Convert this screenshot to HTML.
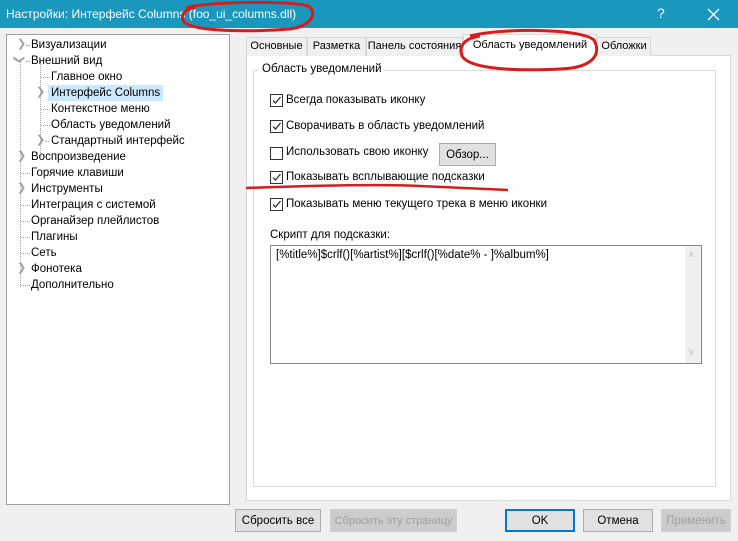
<!DOCTYPE html>
<html><head><meta charset="utf-8"><style>
*{box-sizing:border-box}
body{margin:0;width:738px;height:541px;background:#f0f0f0;font-family:"Liberation Sans",sans-serif;font-size:11.5px;color:#000;position:relative;overflow:hidden}
.a{position:absolute;white-space:nowrap}
.tb{left:0;top:0;width:738px;height:28px;background:#1a97bd;color:#fff;font-size:12px}
.tree{left:6px;top:34px;width:224px;height:471px;background:#fff;border:1px solid #a0a0a0}
.it{position:absolute;height:16px;line-height:16px}
.sel{background:#cce8ff;padding:0 3px}
.chev{position:absolute;color:#a0a0a0;font-size:11px}
.dv{position:absolute;border-left:1px dotted #a0a0a0;width:0}
.dh{position:absolute;border-top:1px dotted #a0a0a0;height:0}
.tab{position:absolute;top:37px;height:19px;line-height:17px;border:1px solid #d9d9d9;border-bottom:none;background:#f0f0f0;text-align:center;font-size:11px;overflow:hidden;white-space:nowrap}
.panel{left:246px;top:55px;width:485px;height:446px;background:#fff;border:1px solid #d9d9d9}
.grp{left:253px;top:70px;width:463px;height:417px;border:1px solid #dcdcdc}
.cb{position:absolute;width:13px;height:13px;border:1px solid #333;background:#fff}
.cb svg{position:absolute;left:0;top:0}
.btn{position:absolute;height:23px;line-height:22px;text-align:center;border:1px solid #adadad;background:#e1e1e1}
.dis{color:#a0a0a0;border-color:#cfcfcf;background:#ccc}
</style></head><body>
<div class="a tb"><span style="position:absolute;left:6px;top:7px">Настройки: Интерфейс Columns (foo_ui_columns.dll)</span>
<span style="position:absolute;left:657px;top:5px;font-size:14px">?</span>
<svg style="position:absolute;left:707px;top:8px" width="13" height="13"><path d="M1 1L12 12M12 1L1 12" stroke="#fff" stroke-width="1.3"/></svg></div>

<div class="a tree">
<div class="dv" style="left:13px;top:26px;height:96px"></div>
<div class="dv" style="left:33px;top:26px;height:96px"></div>
<div class="dv" style="left:13px;top:124px;height:128px"></div>
<span class="chev" style="left:10px;top:2px">&#x276F;</span><div class="dh" style="left:19px;top:10px;width:4px"></div><div class="it" style="left:24px;top:2px">Визуализации</div>
<span class="chev" style="left:8px;top:18px;transform:rotate(90deg)">&#x276F;</span><div class="dh" style="left:19px;top:26px;width:4px"></div><div class="it" style="left:24px;top:18px">Внешний вид</div>
<div class="dh" style="left:34px;top:42px;width:9px"></div><div class="it" style="left:44px;top:34px">Главное окно</div>
<span class="chev" style="left:29px;top:50px">&#x276F;</span><div class="it sel" style="left:41px;top:50px">Интерфейс Columns</div>
<div class="dh" style="left:34px;top:74px;width:9px"></div><div class="it" style="left:44px;top:66px">Контекстное меню</div>
<div class="dh" style="left:34px;top:90px;width:9px"></div><div class="it" style="left:44px;top:82px">Область уведомлений</div>
<span class="chev" style="left:29px;top:98px">&#x276F;</span><div class="dh" style="left:38px;top:106px;width:4px"></div><div class="it" style="left:44px;top:98px">Стандартный интерфейс</div>
<span class="chev" style="left:10px;top:114px">&#x276F;</span><div class="it" style="left:24px;top:114px">Воспроизведение</div>
<div class="dh" style="left:14px;top:138px;width:9px"></div><div class="it" style="left:24px;top:130px">Горячие клавиши</div>
<span class="chev" style="left:10px;top:146px">&#x276F;</span><div class="it" style="left:24px;top:146px">Инструменты</div>
<div class="dh" style="left:14px;top:170px;width:9px"></div><div class="it" style="left:24px;top:162px">Интеграция с системой</div>
<div class="dh" style="left:14px;top:186px;width:9px"></div><div class="it" style="left:24px;top:178px">Органайзер плейлистов</div>
<div class="dh" style="left:14px;top:202px;width:9px"></div><div class="it" style="left:24px;top:194px">Плагины</div>
<div class="dh" style="left:14px;top:218px;width:9px"></div><div class="it" style="left:24px;top:210px">Сеть</div>
<span class="chev" style="left:10px;top:226px">&#x276F;</span><div class="it" style="left:24px;top:226px">Фонотека</div>
<div class="dh" style="left:14px;top:250px;width:9px"></div><div class="it" style="left:24px;top:242px">Дополнительно</div>
</div>

<div class="a panel"></div>
<div class="tab" style="left:246px;width:61px">Основные</div>
<div class="tab" style="left:307px;width:59px">Разметка</div>
<div class="tab" style="left:366px;width:97px">Панель состояния</div>
<div class="tab" style="left:463px;width:134px;top:34px;height:22px;background:#fff;line-height:20px">Область уведомлений</div>
<div class="tab" style="left:597px;width:54px">Обложки</div>
<div class="a grp"></div>
<div class="a" style="left:259px;top:63px;background:#fff;padding:0 3px">Область уведомлений</div>

<div class="cb" style="left:270px;top:94px"><svg width="11" height="11"><path d="M2 5.5L4.5 8L9.5 2" stroke="#222" fill="none" stroke-width="1.2"/></svg></div>
<div class="a" style="left:286px;top:94px">Всегда показывать иконку</div>
<div class="cb" style="left:270px;top:120px"><svg width="11" height="11"><path d="M2 5.5L4.5 8L9.5 2" stroke="#222" fill="none" stroke-width="1.2"/></svg></div>
<div class="a" style="left:286px;top:120px">Сворачивать в область уведомлений</div>
<div class="cb" style="left:270px;top:147px"></div>
<div class="a" style="left:286px;top:146px">Использовать свою иконку</div>
<div class="btn" style="left:439px;top:143px;width:57px">Обзор...</div>
<div class="cb" style="left:270px;top:171px"><svg width="11" height="11"><path d="M2 5.5L4.5 8L9.5 2" stroke="#222" fill="none" stroke-width="1.2"/></svg></div>
<div class="a" style="left:286px;top:171px">Показывать всплывающие подсказки</div>
<div class="cb" style="left:270px;top:198px"><svg width="11" height="11"><path d="M2 5.5L4.5 8L9.5 2" stroke="#222" fill="none" stroke-width="1.2"/></svg></div>
<div class="a" style="left:286px;top:198px">Показывать меню текущего трека в меню иконки</div>
<div class="a" style="left:270px;top:229px">Скрипт для подсказки:</div>
<div class="a" style="left:270px;top:245px;width:432px;height:119px;background:#fff;border:1px solid #828790"></div>
<div class="a" style="left:685px;top:246px;width:16px;height:117px;background:#f0f0f0"></div>
<div class="a" style="left:688px;top:249px;color:#c0c0c0;font-size:9px">&#x2227;</div>
<div class="a" style="left:688px;top:347px;color:#c0c0c0;font-size:9px">&#x2228;</div>
<div class="a" style="left:276px;top:249px">[%title%]$crlf()[%artist%][$crlf()[%date% - ]%album%]</div>

<div class="btn" style="left:235px;top:509px;width:86px">Сбросить все</div>
<div class="btn dis" style="left:330px;top:509px;width:127px;font-size:11px">Сбросить эту страницу</div>
<div class="btn" style="left:505px;top:509px;width:70px;border:2px solid #0078d7;line-height:20px">OK</div>
<div class="btn" style="left:583px;top:509px;width:70px">Отмена</div>
<div class="btn dis" style="left:661px;top:509px;width:70px">Применить</div>

<svg class="a" style="left:0;top:0" width="738" height="541">
<path d="M186 8C200 2 290 0 308 6C318 12 312 26 290 29C250 32 195 32 184 22C180 16 184 9 196 7" stroke="#d81c1c" stroke-width="3" fill="none"/>
<path d="M470 36C500 28 580 28 594 40C602 55 592 68 560 69C520 71 470 70 462 56C458 45 466 38 480 36" stroke="#d81c1c" stroke-width="3" fill="none"/>
<path d="M246 188C300 186 380 184 420 186C460 188 490 189 508 190" stroke="#d81c1c" stroke-width="2.5" fill="none"/>
</svg>
</body></html>
